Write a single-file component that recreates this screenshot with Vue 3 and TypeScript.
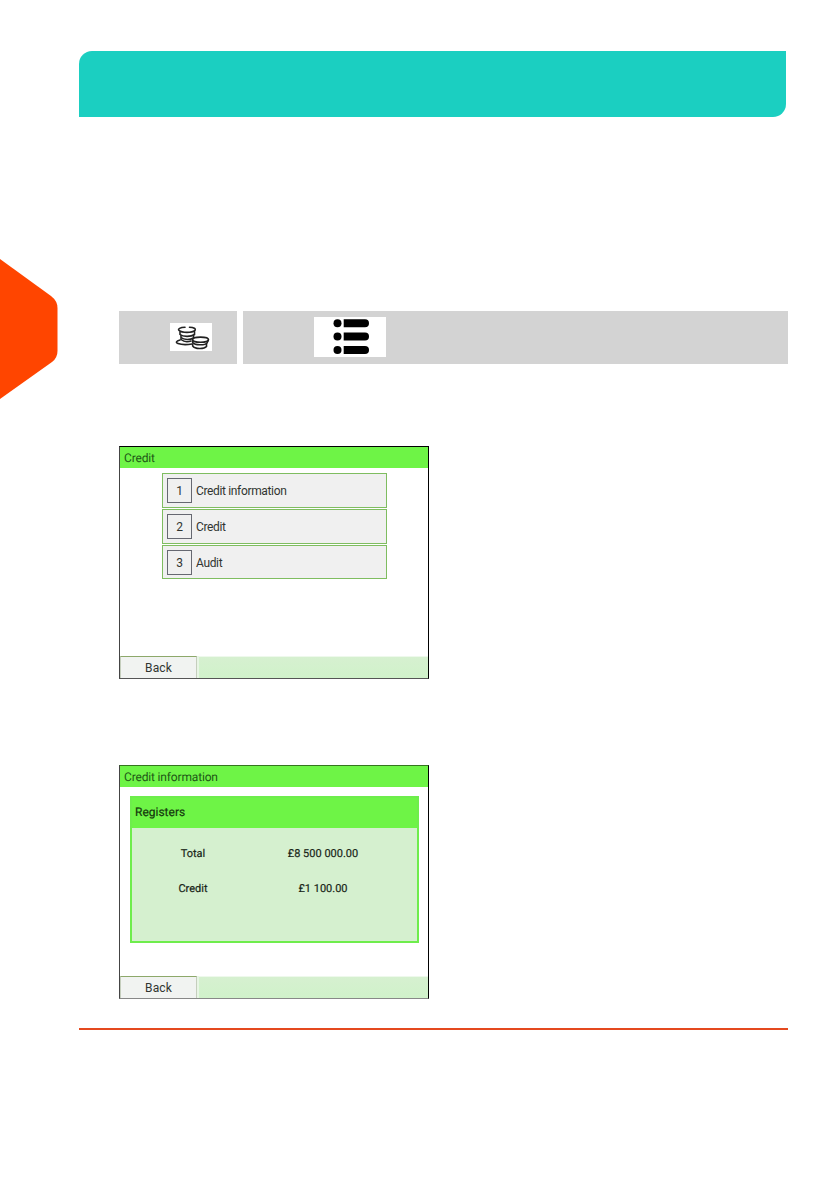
<template>
  <div class="page">
    <svg class="side-tab" width="58" height="140" viewBox="0 0 58 140">
      <path d="M0 0L51 37Q57.500 42 57.500 49V92Q57.500 99 52 103L0 140Z" fill="#ff4500" />
    </svg>

    <header class="banner"></header>

    <div class="path-row">
      <div class="path-cell path-cell--key">
        <svg class="coins" width="42" height="28" viewBox="0 0 42 28">
          <rect width="42" height="28" fill="#fff" />
          <g fill="none" stroke="#222" stroke-width="1.600" stroke-linecap="round">
            <path d="M15 4.300C10 4.500 7.500 6 9 7.300C12 10 22 10 25 7.300C26 5.800 24 4.500 19.500 4.300" />
            <path d="M10 9V11.500C13 14 21 14 24.500 11.500V8.500" />
            <path d="M11 12.500V14.500C14 17 20 17 23.500 15V12.500" />
            <path d="M11 15.500V16.500C14 19 18 19 21 18" />
            <path d="M10 17C6 18 5.500 19.500 8 20.500C12 22 17 21.800 22 21" />
            <ellipse cx="30.500" cy="16.700" rx="8" ry="2.600" />
            <path d="M22.700 17V19.500C25 22.500 35 22.500 37 20L38.300 17" />
            <path d="M22.700 21V23C25 26.300 34 26.300 36.500 23.500V21" />
          </g>
        </svg>
      </div>
      <div class="path-cell path-cell--menu">
        <svg width="72" height="40" viewBox="0 0 72 40">
          <rect width="72" height="40" fill="#fff" />
          <g v-for="y in [6.2, 19.5, 33]" :key="y" fill="#000">
            <circle cx="23.500" :cy="y" r="4" />
            <path :d="`M29.700 ${y - 4}H51a4 4 0 0 1 0 8H29.700Z`" />
          </g>
        </svg>
      </div>
    </div>

    <section class="screen screen--menu">
      <div class="title">Credit</div>
      <div class="menu">
        <button v-for="(item, i) in menuItems" :key="item" class="menu-item">
          <span class="num">{{ i + 1 }}</span>
          <span class="label">{{ item }}</span>
        </button>
      </div>
      <div class="footer"><button class="back">Back</button></div>
    </section>

    <section class="screen screen--info">
      <div class="title">Credit information</div>
      <div class="panel">
        <div class="panel-title">Registers</div>
        <div v-for="reg in registers" :key="reg.name" class="register">
          <span class="reg-name">{{ reg.name }}</span>
          <span class="reg-value">{{ reg.value }}</span>
        </div>
      </div>
      <div class="footer"><button class="back">Back</button></div>
    </section>

    <hr class="rule" />
  </div>
</template>

<script lang="ts" setup>
import { ref } from "vue";

interface Register {
  name: string
  value: string
}

const menuItems = ref<string[]>(["Credit information", "Credit", "Audit"]);

const registers = ref<Register[]>([
  { name: "Total", value: "£8 500 000.00" },
  { name: "Credit", value: "£1 100.00" },
]);
</script>

<style>
body {
  background: #fff;
}
</style>

<style scoped>
.page {
  position: relative;
  box-sizing: border-box;
  width: 839px;
  height: 1191px;
  padding: 51px 51px 0 79px;
  overflow: hidden;
  font-family: Roboto, "Liberation Sans", sans-serif;
  font-size: 12px;
  text-rendering: geometricPrecision;
  color: #303530;
}
.page * {
  box-sizing: border-box;
}
.side-tab {
  position: absolute;
  left: 0;
  top: 259px;
}
.banner {
  width: 707px;
  height: 66px;
  background: #1bcfc1;
  border-radius: 13px 0 13px 0;
}
.path-row {
  display: flex;
  gap: 6px;
  margin: 194px 0 0 40px;
}
.path-cell {
  display: flex;
  height: 53px;
  background: #d3d3d3;
}
.path-cell--key {
  width: 118px;
  padding: 12px 0 0 51px;
}
.path-cell--menu {
  width: 545px;
  padding: 6px 0 0 71px;
}
.screen {
  display: flex;
  flex-direction: column;
  width: 310px;
  height: 233px;
  margin-left: 40px;
  border: 1px solid #000;
  border-left-color: #444;
  border-bottom-color: #555;
  background: #fff;
}
.screen--menu {
  margin-top: 82px;
}
.screen--info {
  height: 234px;
  margin-top: 86px;
  border-top-color: #35751f;
  border-bottom-color: #888;
}
.title {
  height: 21px;
  padding-left: 4px;
  line-height: 23px;
  letter-spacing: -0.16px;
  color: #205716;
  background: #6ef446;
}
button {
  font: inherit;
  color: inherit;
  border-radius: 0;
}
.menu {
  display: flex;
  flex-direction: column;
  gap: 1px;
  width: 225px;
  margin: 5px 0 0 42px;
}
.menu-item {
  display: flex;
  align-items: center;
  gap: 4px;
  height: 35px;
  padding: 0 0 0 4px;
  border: 1px solid #7fbd60;
  background: #f0f0f0;
}
.menu-item:last-child {
  height: 34px;
}
.num {
  width: 25px;
  height: 25px;
  border: 1px solid #666871;
  line-height: 24px;
  text-align: center;
}
.label {
  letter-spacing: -0.35px;
  line-height: 16px;
  padding-top: 1px;
}
.footer {
  height: 22px;
  margin-top: auto;
  background: linear-gradient(#eef9ec 1px, #d6f0d0 1px, #d0f2ca);
}
.back {
  display: block;
  width: 77px;
  height: 22px;
  padding: 0;
  border: 1px solid #c5cebd;
  border-top-color: #8da86a;
  border-bottom: 0;
  line-height: 23px;
  letter-spacing: 0.1px;
  background: #f1f3f1;
  box-shadow: 2px 0 #e8f5e5;
}
.panel {
  width: 289px;
  height: 147px;
  margin: 9px 0 0 10px;
  border: 2px solid #6eed4c;
  background: #d5f0cf;
}
.panel-title {
  height: 30px;
  margin-bottom: 8px;
  padding-left: 3px;
  line-height: 29px;
  color: #14380d;
  background: #6ef446;
  -webkit-text-stroke: 0.2px;
}
.register {
  display: flex;
  height: 35px;
  line-height: 35px;
  font-size: 11px;
  color: #182517;
  text-align: center;
  -webkit-text-stroke: 0.2px;
}
.reg-name {
  width: 122px;
}
.reg-value {
  width: 138px;
}
.rule {
  height: 2px;
  width: 709px;
  margin: 29px 0 0;
  border: 0;
  background: #e4491f;
}
</style>
